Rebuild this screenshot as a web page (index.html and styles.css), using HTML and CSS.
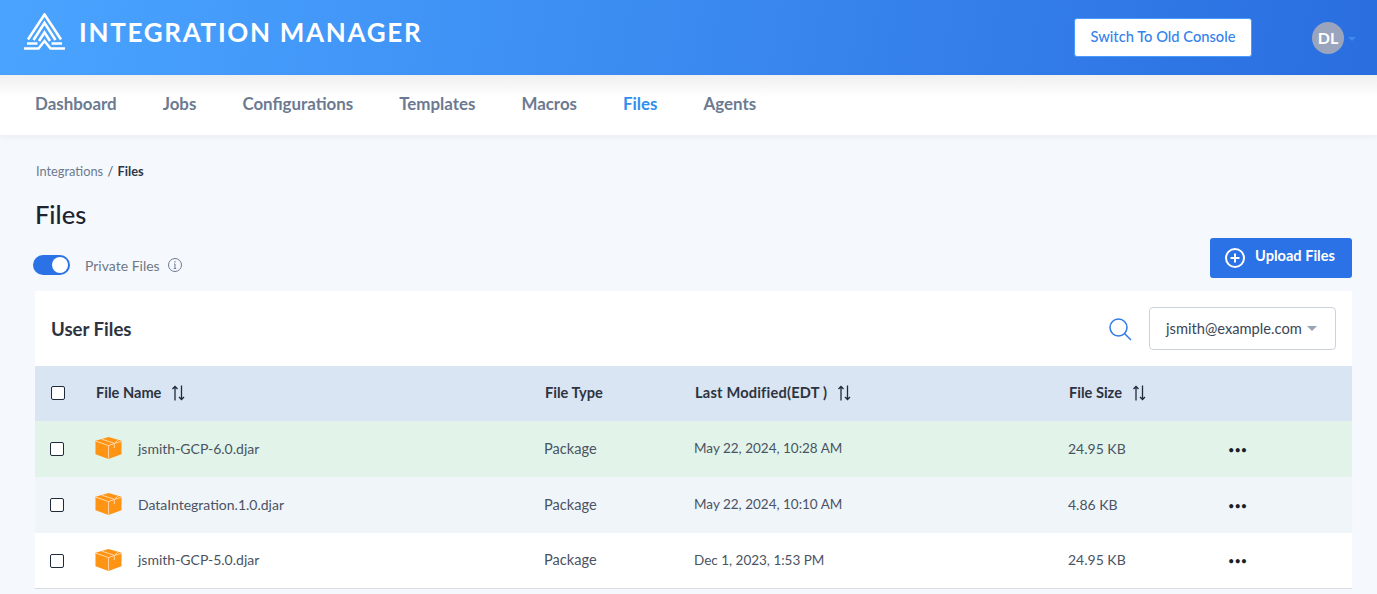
FILE: index.html
```html
<!DOCTYPE html>
<html lang="en">
<head>
    <meta charset="UTF-8">
    <meta name="viewport" content="width=device-width, initial-scale=1.0">
    <title>Files</title>
    <link rel="stylesheet" href="styles.css">
</head>
<body>
    <header class="topbar">
        <div class="brand">
            <svg class="brand-logo" width="44" height="38" viewBox="0 0 44 38" fill="none" stroke="#fff" stroke-width="2.6">
                <path d="M5 26.5L21.5 1.5 38 26.5"/>
                <path d="M10.5 27L21.5 10 32.5 27"/>
                <path d="M16 28L21.5 19.5 27 28"/>
                <path d="M4 30.5H14.5M28.5 30.5H39"/>
                <path d="M1 35.5H15.5L21.5 28 27.5 35.5H42"/>
            </svg>
            <span class="brand-name">INTEGRATION MANAGER</span>
        </div>
        <div class="topbar-right">
            <button class="old-console" type="button">Switch To Old Console</button>
            <div class="avatar">DL</div>
            <span class="avatar-caret"></span>
        </div>
    </header>

    <nav class="tabs">
        <a>Dashboard</a>
        <a>Jobs</a>
        <a>Configurations</a>
        <a>Templates</a>
        <a>Macros</a>
        <a class="active">Files</a>
        <a>Agents</a>
    </nav>

    <main class="content">
        <div class="breadcrumb"><span>Integrations</span> <i>/</i> <b>Files</b></div>
        <h1>Files</h1>

        <div class="toolbar">
            <div class="private">
                <span class="toggle"><span class="knob"></span></span>
                <span class="private-label">Private Files</span>
                <svg width="16" height="16" viewBox="0 0 16 16" fill="none" stroke="#6f7c93" stroke-width="1">
                    <circle cx="8" cy="8" r="6.5"/>
                    <path d="M8 7v4.5M6.8 11.5h2.4M7 7h1"/>
                    <path d="M8 4.2v1.2" stroke-width="1.2"/>
                </svg>
            </div>
            <button class="upload" type="button">
                <svg width="22" height="22" viewBox="0 0 22 22" fill="none" stroke="#fff" stroke-width="2">
                    <circle cx="11" cy="11" r="9"/>
                    <path d="M11 6.5v9M6.5 11h9"/>
                </svg>
                Upload Files
            </button>
        </div>

        <section class="card">
            <div class="card-head">
                <h2>User Files</h2>
                <svg class="search" width="24" height="24" viewBox="0 0 24 24" fill="none" stroke="#2f7be6" stroke-width="1.5">
                    <circle cx="10.5" cy="10.5" r="8.5"/>
                    <path d="M16.5 16.5L23 23"/>
                </svg>
                <div class="owner">jsmith@example.com <span class="caret"></span></div>
            </div>

            <div class="row head">
                <span class="check"></span>
                <span class="cell">File Name <svg class="sort" width="15" height="16" viewBox="0 0 15 16" fill="none" stroke="#1f2a3a" stroke-width="1.3"><path d="M4 15.5V1.5M1.5 4l2.5-2.5L6.5 4M10.5.5v14M8 12l2.5 2.5L13 12"/></svg></span>
                <span class="cell">File Type</span>
                <span class="cell modified">Last Modified(EDT ) <svg class="sort" width="15" height="16" viewBox="0 0 15 16" fill="none" stroke="#1f2a3a" stroke-width="1.3"><path d="M4 15.5V1.5M1.5 4l2.5-2.5L6.5 4M10.5.5v14M8 12l2.5 2.5L13 12"/></svg></span>
                <span class="cell">File Size <svg class="sort" width="15" height="16" viewBox="0 0 15 16" fill="none" stroke="#1f2a3a" stroke-width="1.3"><path d="M4 15.5V1.5M1.5 4l2.5-2.5L6.5 4M10.5.5v14M8 12l2.5 2.5L13 12"/></svg></span>
                <span></span>
            </div>

            <div class="row item new">
                <span class="check"></span>
                <span class="cell name">
                    <svg class="pkg" width="28" height="24" viewBox="0 0 28 24"><path fill="#ff9414" d="M14 0.5L27.5 4.5V18.5L14 23.5 0.5 18.5V4.5z"/><path fill="none" stroke="#ffd9ab" stroke-width="1" d="M1 5L14 9.5 27 5M14 9.5V23M7 2.8L20 7.2V12M20 7.2L24 3.8"/></svg>
                    jsmith-GCP-6.0.djar
                </span>
                <span class="cell kind">Package</span>
                <span class="cell date">May 22, 2024, 10:28 AM</span>
                <span class="cell">24.95 KB</span>
                <span class="dots">&bull;&bull;&bull;</span>
            </div>
            <div class="row item alt">
                <span class="check"></span>
                <span class="cell name">
                    <svg class="pkg" width="28" height="24" viewBox="0 0 28 24"><path fill="#ff9414" d="M14 0.5L27.5 4.5V18.5L14 23.5 0.5 18.5V4.5z"/><path fill="none" stroke="#ffd9ab" stroke-width="1" d="M1 5L14 9.5 27 5M14 9.5V23M7 2.8L20 7.2V12M20 7.2L24 3.8"/></svg>
                    DataIntegration.1.0.djar
                </span>
                <span class="cell kind">Package</span>
                <span class="cell date">May 22, 2024, 10:10 AM</span>
                <span class="cell">4.86 KB</span>
                <span class="dots">&bull;&bull;&bull;</span>
            </div>
            <div class="row item last">
                <span class="check"></span>
                <span class="cell name">
                    <svg class="pkg" width="28" height="24" viewBox="0 0 28 24"><path fill="#ff9414" d="M14 0.5L27.5 4.5V18.5L14 23.5 0.5 18.5V4.5z"/><path fill="none" stroke="#ffd9ab" stroke-width="1" d="M1 5L14 9.5 27 5M14 9.5V23M7 2.8L20 7.2V12M20 7.2L24 3.8"/></svg>
                    jsmith-GCP-5.0.djar
                </span>
                <span class="cell kind">Package</span>
                <span class="cell date">Dec 1, 2023, 1:53 PM</span>
                <span class="cell">24.95 KB</span>
                <span class="dots">&bull;&bull;&bull;</span>
            </div>
        </section>
    </main>
</body>
</html>
```

FILE: styles.css
```css
* {
    box-sizing: border-box;
}
html, body {
    height: 100%;
}
body {
    margin: 0;
    overflow: hidden;
    background: #f5f8fc;
    color: #1f2a3a;
    font-family: Lato, "Open Sans", sans-serif;
}
.topbar {
    height: 75px;
    display: flex;
    align-items: center;
    justify-content: space-between;
    padding: 0 21px 0 23px;
    background: linear-gradient(100deg, #4aa4ff 0%, #3f92f5 35%, #2a6ee0 100%);
}
.brand {
    display: flex;
    align-items: center;
    gap: 12px;
    margin-top: -11px;
}
.brand-name {
    color: #fff;
    font-family: Lato, sans-serif;
    font-weight: 700;
    font-size: 26px;
    letter-spacing: 1.7px;
}
.topbar-right {
    display: flex;
    align-items: center;
}
.old-console {
    width: 178px;
    height: 39px;
    margin-right: 60px;
    background: #fff;
    border: 1px solid #4a9bff;
    border-radius: 3px;
    color: #3382ee;
    font-family: inherit;
    font-size: 14.7px;
    font-weight: 500;
    padding: 0 0 3px;
}
.avatar {
    width: 32px;
    height: 32px;
    border-radius: 50%;
    background: #9aa5bd;
    color: #fff;
    font-size: 16px;
    font-weight: 700;
    line-height: 32px;
    text-align: center;
}
.avatar-caret {
    margin: 2px 0 0 4px;
    border: 4px solid transparent;
    border-top: 4px solid #3f8cf0;
    border-bottom: 0;
}
.tabs {
    height: 60px;
    display: flex;
    align-items: center;
    gap: 46px;
    padding: 0 35px 3px;
    background: linear-gradient(to bottom, #f0f0f0, #fff 22px);
    box-shadow: 0 2px 6px rgba(40, 60, 90, 0.05);
}
.tabs a {
    color: #6c7a91;
    font-size: 16.9px;
    font-weight: 700;
}
.tabs a.active {
    color: #2f8fee;
}
.content {
    padding: 0 25px 0 35px;
}
.breadcrumb {
    padding: 28px 0 0 1px;
    font-size: 12.8px;
    line-height: 16px;
    color: #6c7a91;
}
.breadcrumb i {
    font-style: normal;
    margin: 0 1px;
    color: #4a5568;
}
.breadcrumb b {
    font-weight: 700;
    color: #2d3748;
}
h1 {
    margin: 20px 0 0;
    font-size: 25.5px;
    font-weight: 500;
    line-height: 30px;
    color: #1c2430;
}
.toolbar {
    height: 62px;
    display: flex;
    justify-content: space-between;
    padding-top: 9px;
}
.private {
    display: flex;
    align-items: center;
    height: 45px;
    margin-left: -2px;
    padding-top: 9px;
}
.toggle {
    width: 37px;
    height: 20px;
    padding: 2px;
    display: flex;
    justify-content: flex-end;
    border-radius: 10px;
    background: #2a72e5;
}
.knob {
    width: 16px;
    height: 16px;
    border-radius: 50%;
    background: #fff;
}
.private-label {
    margin: 0 7px 0 15px;
    color: #6f7787;
    font-size: 14px;
}
.upload {
    width: 142px;
    height: 40px;
    display: flex;
    align-items: center;
    justify-content: center;
    gap: 9px;
    background: #2a72e5;
    border: 0;
    border-radius: 3px;
    color: #fff;
    font-family: inherit;
    font-size: 14.6px;
    font-weight: 700;
    padding: 0 3px 5px 0;
}
.upload svg {
    margin-top: 5px;
}
.card {
    background: #fff;
}
.card-head {
    height: 75px;
    display: flex;
    align-items: center;
    padding: 0 16px;
}
h2 {
    margin: 0 auto 0 0;
    font-size: 18.6px;
    font-weight: 700;
    color: #2d3340;
}
.search {
    margin-right: 17px;
}
.owner {
    width: 187px;
    height: 43px;
    display: flex;
    align-items: center;
    gap: 1px;
    padding: 0 0 2px 16px;
    border: 1px solid #ccd2dc;
    border-radius: 4px;
    color: #3c4656;
    font-size: 14.7px;
    white-space: pre;
}
.caret {
    border: 5px solid transparent;
    border-top: 5px solid #9aa3b2;
    border-bottom: 0;
    margin-top: 2px;
}
.row {
    display: grid;
    grid-template-columns: 45px 449px 150px 374px 159px 1fr;
    align-items: center;
    padding-left: 15px;
    font-size: 14px;
}
.row .cell {
    padding-bottom: 2px;
}
.row.head {
    height: 55px;
    padding-left: 16px;
    background: #d9e5f2;
    color: #2d3340;
    font-size: 14.6px;
    font-weight: 700;
}
.row.head .cell {
    display: flex;
    align-items: center;
    gap: 6px;
    white-space: pre;
}
.row.head .modified {
    letter-spacing: 0.2px;
}
.row.head .check {
    margin-bottom: 1px;
}
.item {
    color: #4a5363;
}
.item.new {
    height: 56px;
    background: #e2f4e9;
}
.item.alt {
    height: 56px;
    background: #f0f5fa;
}
.item.last {
    height: 56px;
    border-bottom: 1px solid #d9dde3;
}
.check {
    width: 14px;
    height: 14px;
    border: 1.5px solid #1f2a3a;
    border-radius: 2px;
    background: #fff;
}
.name {
    display: flex;
    align-items: center;
    gap: 16px;
    margin-left: 0;
}
.pkg {
    width: 27px;
    flex: none;
}
.kind {
    font-size: 14.6px;
}
.date {
    font-size: 13.5px;
}
.dots {
    margin-left: 1px;
    color: #1a1f29;
    font-size: 11px;
    letter-spacing: 0;
    line-height: 1;
}
```
